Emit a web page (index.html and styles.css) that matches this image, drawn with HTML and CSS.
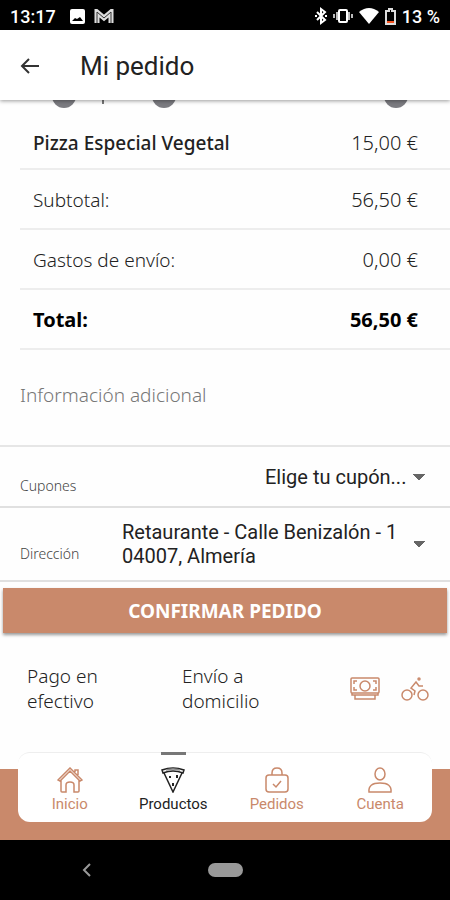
FILE: index.html
```html
<!DOCTYPE html>
<html lang="es">

<head>
    <meta charset="UTF-8">
    <meta name="viewport" content="width=device-width, initial-scale=1.0">
    <title>Mi pedido</title>
    <link rel="stylesheet" href="styles.css">
</head>

<body>
    <div class="status-bar">
        <span>13:17</span>
        <svg class="status-photo" width="15" height="15" viewBox="0 0 15 15">
            <rect width="15" height="15" rx="2" fill="#fff"/>
            <path d="M2 12l3-3 2 1 3-2 3 4z" fill="#000"/>
        </svg>
        <svg width="20" height="15" viewBox="0 0 20 15">
            <path d="M3 14V3l7 6 7-6v11" fill="none" stroke="#ddd" stroke-width="5"/>
            <path d="M3 14V3l7 6 7-6v11" fill="none" stroke="#333" stroke-width="1"/>
        </svg>
        <div class="status-right">
            <svg width="12" height="18" viewBox="0 0 12 18">
                <path d="M2 5l8 8-4 3V2l4 3-8 8M0 9h2M10 9h2" fill="none" stroke="#fff" stroke-width="2"/>
            </svg>
            <svg width="20" height="16" viewBox="0 0 20 16">
                <path d="M1 6v4M4 4v8M16 4v8M19 6v4" stroke="#bbb" stroke-width="2"/>
                <rect x="6" y="2" width="8" height="12" rx="1" fill="none" stroke="#fff" stroke-width="2"/>
            </svg>
            <svg width="20" height="16" viewBox="0 0 20 16">
                <path d="M0 4Q10-4 20 4L10 16z" fill="#fff"/>
            </svg>
            <svg width="11" height="17" viewBox="0 0 11 17">
                <path d="M1 3h3V1h3v2h3v13H1z" fill="none" stroke="#ddd" stroke-width="2"/>
                <path d="M2 14h7" stroke="#f4511e" stroke-width="2"/>
            </svg>
            <span>13 %</span>
        </div>
    </div>

    <header class="toolbar">
        <button class="back" aria-label="Volver">
            <svg width="20" height="18" viewBox="0 0 20 18">
                <path d="M19 9H2M9 2L2 9l7 7" fill="none" stroke="#333" stroke-width="2"/>
            </svg>
        </button>
        <h1>Mi pedido</h1>
    </header>

    <main>
        <!-- stepper of the last product, scrolled under the toolbar -->
        <div class="stepper">
            <button aria-label="Quitar"></button>
            <span class="quantity"></span>
            <button aria-label="Añadir"></button>
            <button class="delete" aria-label="Eliminar"></button>
        </div>

        <table class="summary">
            <tbody>
                <tr class="product">
                    <th scope="row">Pizza Especial Vegetal</th>
                    <td>15,00 €</td>
                </tr>
                <tr>
                    <th scope="row">Subtotal:</th>
                    <td>56,50 €</td>
                </tr>
                <tr>
                    <th scope="row">Gastos de envío:</th>
                    <td>0,00 €</td>
                </tr>
                <tr class="total">
                    <th scope="row">Total:</th>
                    <td>56,50 €</td>
                </tr>
            </tbody>
        </table>

        <input class="notes" type="text" placeholder="Información adicional" aria-label="Información adicional">

        <div class="field">
            <label for="coupon">Cupones</label>
            <select id="coupon">
                <option>Elige tu cupón...</option>
            </select>
        </div>
        <div class="field field-address">
            <label for="address">Dirección</label>
            <select id="address" class="address">
                <option>Retaurante - Calle Benizalón - 1 04007, Almería</option>
            </select>
        </div>

        <button class="confirm">CONFIRMAR PEDIDO</button>

        <div class="methods">
            <p>Pago en efectivo</p>
            <p>Envío a domicilio</p>
            <div class="method-icons">
                <svg width="30" height="24" viewBox="0 0 30 24">
                    <rect x="1" y="1" width="28" height="15" rx="1"/>
                    <circle cx="15" cy="9" r="5"/>
                    <path d="M4 7V4h3M26 7V4h-3M4 10v3h3M26 10v3h-3M2 16v2h26v-2M5 18v4h20v-4"/>
                </svg>
                <svg width="28" height="24" viewBox="0 0 28 24">
                    <circle cx="6" cy="18" r="5"/>
                    <circle cx="22" cy="18" r="5"/>
                    <circle cx="18" cy="2" r="1"/>
                    <path d="M13 18l1-4-4-3 5-6 3 4h4"/>
                </svg>
            </div>
        </div>
    </main>

    <nav class="tabs">
        <div class="tabs-card">
            <a href="#">
                <svg width="26" height="26" viewBox="0 0 26 26">
                    <path d="M4 13v11c0 1 1 1 1 1h4v-7q0-3 4-3t4 3v7h4s1 0 1-1V13M1 13L13 1l12 12-2 1L13 4 3 14zM18 5V3h3v5"/>
                </svg>
                Inicio
            </a>
            <a href="#" class="active">
                <svg width="26" height="26" viewBox="0 0 26 26">
                    <path d="M2 3q11-4 22 0l-1 3q-10-4-20 0zM4 6l9 19 9-19"/>
                    <path d="M6 3q7-2 14 0" stroke="#888"/>
                    <path d="M9 9h2v2H9zM16 8h2v3h-2zM12 16h2v3h-2z" class="topping"/>
                </svg>
                Productos
            </a>
            <a href="#">
                <svg width="26" height="26" viewBox="0 0 26 26">
                    <rect x="2" y="8" width="22" height="17" rx="3"/>
                    <path d="M8 8V6q0-5 5-5t5 5v2M9 17l3 3 5-6"/>
                </svg>
                Pedidos
            </a>
            <a href="#">
                <svg width="26" height="26" viewBox="0 0 26 26">
                    <ellipse cx="13" cy="7" rx="5" ry="6"/>
                    <path d="M2 25q-1-9 11-9t11 9z"/>
                </svg>
                Cuenta
            </a>
        </div>
    </nav>

    <div class="system-nav">
        <button class="system-back" aria-label="Atrás">
            <svg width="10" height="14" viewBox="0 0 10 14">
                <path d="M8 1L2 7l6 6" fill="none" stroke="#999" stroke-width="2"/>
            </svg>
        </button>
        <button class="pill" aria-label="Inicio del sistema"></button>
    </div>
</body>

</html>
```

FILE: styles.css
```css
* {
    box-sizing: border-box;
}

body {
    display: flex;
    flex-direction: column;
    min-height: 100vh;
    margin: 0;
    background: #fefefe;
    color: #222;
    font-family: "Noto Sans", "Open Sans", sans-serif;
    font-size: 19px;
}

button {
    padding: 0;
    border: 0;
    background: none;
    font-family: inherit;
}

svg {
    display: block;
    flex: none;
}

.status-bar {
    display: flex;
    align-items: center;
    gap: 9px;
    height: 30px;
    padding: 2px 10px 0;
    background: #000;
    color: #fff;
    font: 500 18px Roboto, sans-serif;
}

.status-photo {
    margin-left: 5px;
}

.status-right {
    display: flex;
    align-items: center;
    gap: 6px;
    margin-left: auto;
}

.toolbar {
    position: relative;
    display: flex;
    align-items: center;
    gap: 40px;
    height: 70px;
    padding: 2px 20px 0;
    background: #fff;
    box-shadow: 0 1px 4px rgba(0, 0, 0, 0.4);
}

.toolbar h1 {
    margin: 0;
    font: 400 26px Roboto, sans-serif;
}

main {
    flex: 1;
}

.stepper {
    display: flex;
    align-items: flex-end;
    height: 8px;
    padding: 0 42px 0 52px;
    overflow: hidden;
}

.stepper button {
    width: 24px;
    height: 24px;
    border-radius: 50%;
    background: #7b7b80;
}

.quantity {
    width: 2px;
    height: 5px;
    margin: 0 48px 4px 26px;
    background: #777;
}

.stepper .delete {
    margin-left: auto;
}

.summary {
    width: calc(100% - 20px);
    margin-left: 20px;
    border-collapse: collapse;
    line-height: 28px;
}

.summary th,
.summary td {
    height: 60px;
    padding: 2px 32px 0 13px;
    border-bottom: 2px solid #ededed;
    font-weight: 300;
    text-align: left;
}

.summary td {
    font-size: 20px;
    text-align: right;
}

.summary .product th {
    font-weight: 500;
}

.summary .product th,
.summary .product td {
    height: 61px;
    padding-top: 10px;
}

.summary .total th,
.summary .total td {
    color: #000;
    font-size: 20px;
    font-weight: 700;
}

.notes {
    display: block;
    width: 100%;
    height: 97px;
    padding: 0 20px 6px;
    border: 0;
    border-bottom: 2px solid #e6e6e6;
    background: none;
    font: inherit;
    font-weight: 300;
}

.notes::placeholder {
    color: #777;
}

.field {
    display: flex;
    align-items: center;
    justify-content: space-between;
    height: 61px;
    padding: 0 25px 0 20px;
    border-bottom: 2px solid #e0e0e0;
}

.field-address {
    height: 74px;
}

.field label {
    padding-top: 18px;
    color: #444;
    font-size: 14px;
    font-weight: 300;
}

.field select {
    padding: 0 18px 0 0;
    border: 0;
    appearance: none;
    background: conic-gradient(from -45deg at 50% 100%, #666 90deg, transparent 0) right center / 12px 6px no-repeat;
    color: #222;
    font: 400 20px/24px Roboto, sans-serif;
}

.field .address {
    width: 303px;
    height: 48px;
    white-space: normal;
}

.confirm {
    display: block;
    width: calc(100% - 6px);
    height: 45px;
    margin: 6px 3px 0;
    background: #c9896b;
    box-shadow: 0 2px 3px rgba(0, 0, 0, 0.4);
    color: #fff;
    font-size: 19px;
    font-weight: 700;
}

.methods {
    display: grid;
    grid-template-columns: 155px 1fr auto;
    align-items: center;
    padding: 31px 21px 0 27px;
    font-weight: 300;
    line-height: 25px;
}

.methods p {
    width: 90px;
    margin: 0;
}

.method-icons {
    display: flex;
    gap: 21px;
}

.method-icons svg,
.tabs svg {
    fill: none;
    stroke: #c9896b;
    stroke-width: 1.5;
}

.tabs {
    padding: 0 18px 18px;
    background: linear-gradient(transparent 17px, #c9896b 17px);
}

.tabs-card {
    display: flex;
    height: 70px;
    border-top: 1px solid #eee;
    border-radius: 12px;
    background: #fff;
}

.tabs a {
    position: relative;
    display: flex;
    flex: 1;
    flex-direction: column;
    align-items: center;
    gap: 1px;
    padding-top: 14px;
    color: #c9896b;
    font: 400 15px/20px Roboto, sans-serif;
    text-decoration: none;
}

.tabs .active {
    color: #222;
}

.tabs .active svg {
    stroke: #222;
}

.topping {
    fill: #222;
    stroke: none;
}

.active::before {
    position: absolute;
    top: -1px;
    width: 25px;
    height: 3px;
    background: #777;
    content: "";
}

.system-nav {
    display: grid;
    grid-template-columns: 1fr auto 1fr;
    align-items: center;
    height: 60px;
    background: #000;
}

.system-back {
    justify-self: center;
    padding-right: 34px;
}

.pill {
    width: 35px;
    height: 14px;
    border-radius: 7px;
    background: #999;
}
```
